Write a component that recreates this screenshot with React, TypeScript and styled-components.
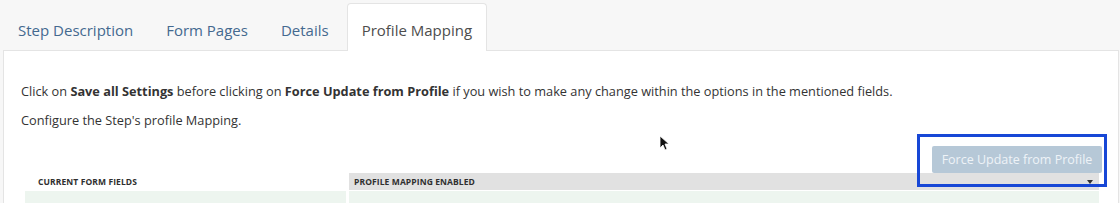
import { FC } from "react"
import styled, { createGlobalStyle } from "styled-components"

const GlobalStyle = createGlobalStyle`
  body {
    margin: 0;
    background-color: #f7f7f7;
    font-family: "Open Sans", "Liberation Sans", sans-serif;
  }
`

const Page = styled.div`
  position: relative;
  width: 1120px;
  height: 203px;
  overflow: hidden;
  padding-left: 3px;
  padding-right: 1px;
  box-sizing: border-box;
`

const TabBar = styled.div`
  display: flex;
  align-items: flex-end;
  height: 50px;
  gap: 3px;
`

const Tab = styled.div<{ $active?: boolean }>`
  box-sizing: border-box;
  height: ${p => (p.$active ? "48px" : "47px")};
  margin-bottom: ${p => (p.$active ? "-1px" : "0")};
  padding: 16px 14px 0;
  font-size: 15px;
  line-height: 20px;
  color: ${p => (p.$active ? "#4d4d4d" : "#44698f")};
  background-color: ${p => (p.$active ? "#ffffff" : "transparent")};
  border: 1px solid ${p => (p.$active ? "#e4e4e4" : "transparent")};
  border-bottom: none;
  border-radius: 4px 4px 0 0;
  position: relative;
  z-index: 1;
`

const Panel = styled.div`
  background-color: #ffffff;
  border: 1px solid #e4e4e4;
  border-bottom: none;
  height: 153px;
  box-sizing: border-box;
  padding: 30px 19px 0 17px;
`

const Paragraph = styled.p`
  margin: 0 0 9px;
  font-size: 12.75px;
  line-height: 20px;
  color: #333333;

  b {
    font-weight: 700;
  }
`

const ButtonRow = styled.div`
  display: flex;
  justify-content: flex-end;
  margin-top: 16px;
`

const Highlight = styled.div`
  position: relative;

  &::after {
    content: "";
    position: absolute;
    left: -15px;
    right: -8px;
    top: -12px;
    bottom: -14px;
    border: 3px solid #1747d6;
    pointer-events: none;
    z-index: 2;
  }
`

const Button = styled.button`
  height: 27px;
  width: 170px;
  border: none;
  border-radius: 2px;
  background-color: #b6c8d7;
  color: #eef3f7;
  font-family: "Open Sans", "Liberation Sans", sans-serif;
  font-size: 12.5px;
  padding: 0;
  margin-right: -3px;
`

const Table = styled.div`
  margin: 0 0 0 4px;
  display: grid;
  grid-template-columns: 321px 1fr;
  column-gap: 3px;
`

const HeaderCell = styled.div<{ $shaded?: boolean }>`
  height: 17px;
  display: flex;
  align-items: center;
  justify-content: space-between;
  padding: 0 6px 0 ${p => (p.$shaded ? "5px" : "13px")};
  background-color: ${p => (p.$shaded ? "#e1e1e1" : "transparent")};
  font-size: 8.5px;
  font-weight: 700;
  color: #2f2f2f;
  text-transform: uppercase;
  letter-spacing: 0.1px;
`

const Caret = styled.span`
  width: 0;
  height: 0;
  border-left: 3px solid transparent;
  border-right: 3px solid transparent;
  border-top: 4px solid #333333;
`

const DataCell = styled.div`
  height: 14px;
  margin-top: 1px;
  background-color: #edf5ef;
`

const Cursor = styled.svg`
  position: absolute;
  left: 659px;
  top: 135px;
  z-index: 3;
`

const App: FC = () => (
  <>
    <GlobalStyle />
    <Page>
      <TabBar>
        <Tab>Step Description</Tab>
        <Tab>Form Pages</Tab>
        <Tab>Details</Tab>
        <Tab $active>Profile Mapping</Tab>
      </TabBar>
      <Panel>
        <Paragraph>
          Click on <b>Save all Settings</b> before clicking on <b>Force Update from Profile</b> if you wish to make any change within the options in the mentioned fields.
        </Paragraph>
        <Paragraph>Configure the Step's profile Mapping.</Paragraph>
        <ButtonRow>
          <Highlight>
            <Button type="button">Force Update from Profile</Button>
          </Highlight>
        </ButtonRow>
        <Table>
          <HeaderCell>Current Form Fields</HeaderCell>
          <HeaderCell $shaded>
            Profile Mapping Enabled
            <Caret />
          </HeaderCell>
          <DataCell />
          <DataCell />
        </Table>
      </Panel>
      <Cursor width="10" height="16" viewBox="0 0 10 16">
        <path d="M1 1 L1 13 L4 10 L6 15 L8 14 L6 9 L10 9 Z" fill="#111" stroke="#fff" strokeWidth="0.8" />
      </Cursor>
    </Page>
  </>
)

export default App
